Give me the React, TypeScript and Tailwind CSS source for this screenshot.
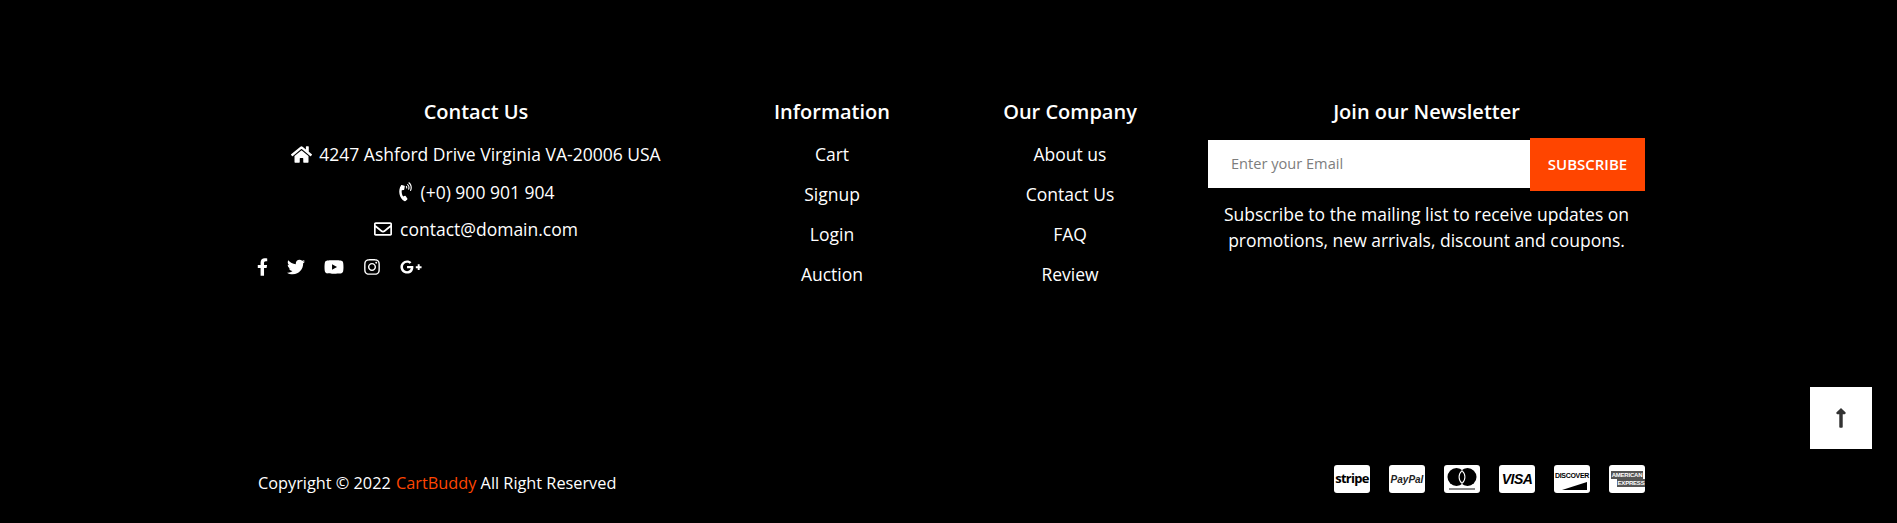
import React from 'react';
import { FaHome, FaPhoneVolume, FaRegEnvelope, FaFacebookF, FaTwitter, FaYoutube, FaInstagram, FaGooglePlusG, FaLongArrowAltUp } from 'react-icons/fa';

const infoLinks = ['Cart', 'Signup', 'Login', 'Auction'];
const companyLinks = ['About us', 'Contact Us', 'FAQ', 'Review'];

const PayCard = ({ children }: { children: React.ReactNode }) => (
  <div className="w-[36px] h-[28px] bg-white rounded-[3px] flex items-center justify-center overflow-hidden relative text-black">
    {children}
  </div>
);

const App: React.FC = () => {
  return (
    <div className="relative w-full h-[523px] bg-black text-white overflow-hidden font-['Open_Sans',sans-serif] text-[17.5px]">
      <div className="ml-[258px] w-[1387px] h-full flex flex-col">
        {/* Top columns */}
        <div className="flex pt-[100px] h-[446px]">
          <div className="w-[436px] text-center">
            <h4 className="text-[20px] font-semibold leading-[24px]">Contact Us</h4>
            <p className="mt-[18px] leading-[24px] flex items-center justify-center gap-[7px]">
              <FaHome className="text-[21px]" /> 4247 Ashford Drive Virginia VA-20006 USA
            </p>
            <p className="mt-[14px] leading-[24px] flex items-center justify-center gap-[5px]">
              <FaPhoneVolume className="text-[18px] -rotate-12" /> (+0) 900 901 904
            </p>
            <p className="mt-[13px] leading-[24px] flex items-center justify-center gap-[8px]">
              <FaRegEnvelope className="text-[18px]" /> contact@domain.com
            </p>
            <div className="mt-[14px] -ml-[1px] flex items-center gap-[19px] h-[24px]">
              <FaFacebookF className="h-[20px] w-[11px]" />
              <FaTwitter className="text-[18px]" />
              <FaYoutube className="text-[20px]" />
              <FaInstagram className="text-[18px]" />
              <FaGooglePlusG className="text-[22px]" />
            </div>
          </div>
          <div className="w-[276px] text-center">
            <h4 className="text-[20px] font-semibold leading-[24px]">Information</h4>
            <ul className="mt-[18px] flex flex-col gap-[16px] leading-[24px]">
              {infoLinks.map((l) => (
                <li key={l}>{l}</li>
              ))}
            </ul>
          </div>
          <div className="w-[200px] text-center">
            <h4 className="text-[20px] font-semibold leading-[24px]">Our Company</h4>
            <ul className="mt-[18px] flex flex-col gap-[16px] leading-[24px]">
              {companyLinks.map((l) => (
                <li key={l}>{l}</li>
              ))}
            </ul>
          </div>
          <div className="ml-[38px] w-[437px] text-center">
            <h4 className="text-[20px] font-semibold leading-[24px]">Join our Newsletter</h4>
            <div className="mt-[14px] flex items-start h-[53px]">
              <input
                className="mt-[2px] w-[322px] h-[48px] bg-white pl-[23px] pb-[2px] text-[14.6px] text-black placeholder:text-[#7d7d7d] outline-none"
                placeholder="Enter your Email"
              />
              <button className="w-[115px] h-[53px] bg-[#ff4500] text-[15px] font-semibold text-white">SUBSCRIBE</button>
            </div>
            <p className="mt-[10px] leading-[26px]">
              Subscribe to the mailing list to receive updates on promotions, new arrivals, discount and coupons.
            </p>
          </div>
        </div>

        {/* Bottom bar */}
        <div className="flex items-center justify-between h-[74px]">
          <p className="text-[16.3px]">
            Copyright © 2022 <span className="text-[#ff4500] ml-[1px]">CartBuddy</span> All Right Reserved
          </p>
          <div className="flex items-center gap-[19px] mb-[8px]">
            <PayCard>
              <span className="font-bold text-[13px] tracking-[-0.7px]">stripe</span>
            </PayCard>
            <PayCard>
              <span className="font-['Liberation_Sans',sans-serif] font-bold italic text-[10px] text-[#222]">PayPal</span>
            </PayCard>
            <PayCard>
              <svg viewBox="0 0 36 28" className="w-[36px] h-[28px]">
                <circle cx="12.5" cy="12" r="9" fill="#000" />
                <circle cx="23.5" cy="12" r="9" fill="#000" />
                <path d="M18 4.9a9 9 0 0 1 0 14.2a9 9 0 0 1 0-14.2z" fill="#fff" />
                <path d="M18 6.5a7.5 7.5 0 0 1 0 11a7.5 7.5 0 0 1 0-11z" fill="#000" />
                <rect x="5" y="23" width="26" height="2" fill="#888" />
              </svg>
            </PayCard>
            <PayCard>
              <span className="font-['Liberation_Sans',sans-serif] font-bold italic text-[14px] tracking-[-0.5px]">VISA</span>
            </PayCard>
            <PayCard>
              <span className="absolute top-[7px] left-0 w-full text-center font-['Liberation_Sans',sans-serif] font-bold text-[7px] leading-[8px] tracking-[-0.3px]">DISCOVER</span>
              <svg viewBox="0 0 36 28" className="absolute inset-0 w-[36px] h-[28px]">
                <path d="M8 25 L33 17 V25 Z" fill="#000" />
              </svg>
            </PayCard>
            <PayCard>
              <div className="w-full flex flex-col items-center font-['Liberation_Sans',sans-serif] font-bold text-[6px] leading-[8px] tracking-[-0.2px]">
                <span className="bg-[#555] text-white px-[1px]">AMERICAN</span>
                <span className="bg-[#555] text-white px-[1px] ml-[8px]">EXPRESS</span>
              </div>
            </PayCard>
          </div>
        </div>
      </div>

      {/* Back to top */}
      <button className="absolute left-[1810px] top-[387px] w-[62px] h-[62px] bg-white flex items-center justify-center text-[#333]">
        <FaLongArrowAltUp className="text-[22px]" />
      </button>
    </div>
  );
};

export default App;
